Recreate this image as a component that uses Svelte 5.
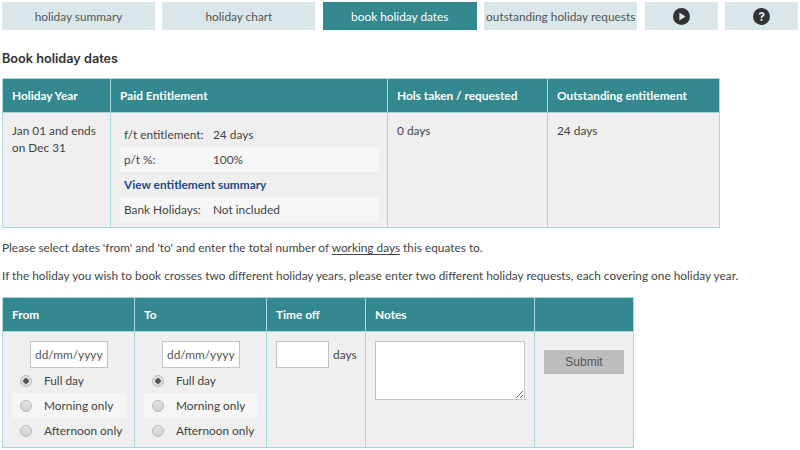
<script>
    let tabs = ["holiday summary", "holiday chart", "book holiday dates", "outstanding holiday requests"];
    let dayParts = ["Full day", "Morning only", "Afternoon only"];
    let entitlement = [
        { label: "f/t entitlement:", value: "24 days" },
        { label: "p/t %:", value: "100%" },
        { link: "View entitlement summary" },
        { label: "Bank Holidays:", value: "Not included" },
    ];
</script>

<main>
    <nav>
        {#each tabs as tab, i}
            <a href="#top" class="tab" class:active={i === 2}>{tab}</a>
        {/each}
        <a href="#top" class="tab small" aria-label="play">
            <svg viewBox="0 0 16 16" width="17" height="17">
                <circle cx="8" cy="8" r="8" fill="#333" />
                <path d="M6 4.2 L11.8 8 L6 11.8 Z" fill="#d9e7ea" />
            </svg>
        </a>
        <a href="#top" class="tab small" aria-label="help">
            <svg viewBox="0 0 16 16" width="17" height="17">
                <circle cx="8" cy="8" r="8" fill="#333" />
                <path d="M5.3 6.2 C5.4 4.5 6.6 3.7 8.1 3.7 C9.7 3.7 10.9 4.6 10.9 6 C10.9 7.8 8.9 7.8 8.9 9.4 L7.1 9.4 C7.1 7.2 9 7.2 9 6.1 C9 5.6 8.6 5.3 8 5.3 C7.4 5.3 7 5.7 7 6.4 Z" fill="#d9e7ea" />
                <rect x="7.1" y="10.3" width="1.8" height="1.8" fill="#d9e7ea" />
            </svg>
        </a>
    </nav>

    <h1>Book holiday dates</h1>

    <table class="summary">
        <thead>
            <tr>
                <th class="c1">Holiday Year</th>
                <th class="c2">Paid Entitlement</th>
                <th class="c3">Hols taken / requested</th>
                <th class="c4">Outstanding entitlement</th>
            </tr>
        </thead>
        <tbody>
            <tr>
                <td>Jan 01 and ends on Dec 31</td>
                <td class="ent">
                    {#each entitlement as row}
                        <div class="ent-row">
                            {#if row.link}
                                <a href="#top" class="view">{row.link}</a>
                            {:else}
                                <span class="lbl">{row.label}</span><span>{row.value}</span>
                            {/if}
                        </div>
                    {/each}
                </td>
                <td>0 days</td>
                <td>24 days</td>
            </tr>
        </tbody>
    </table>

    <p class="first">Please select dates 'from' and 'to' and enter the total number of <u>working days</u> this equates to.</p>
    <p>If the holiday you wish to book crosses two different holiday years, please enter two different holiday requests, each covering one holiday year.</p>

    <table class="form">
        <thead>
            <tr>
                <th class="f1">From</th>
                <th class="f1">To</th>
                <th class="f3">Time off</th>
                <th class="f4">Notes</th>
                <th class="f5"></th>
            </tr>
        </thead>
        <tbody>
            <tr>
                {#each ["from", "to"] as name}
                    <td class="date-cell">
                        <input class="date" type="text" placeholder="dd/mm/yyyy" />
                        {#each dayParts as part, i}
                            <label class="radio">
                                <input type="radio" {name} checked={i === 0} />
                                {part}
                            </label>
                        {/each}
                    </td>
                {/each}
                <td class="off-cell">
                    <div class="off"><input class="num" type="text" /> days</div>
                </td>
                <td class="notes-cell"><textarea></textarea></td>
                <td class="submit-cell"><button>Submit</button></td>
            </tr>
        </tbody>
    </table>
</main>

<style>
    :global(body) {
        margin: 0;
        background: #fff;
    }

    main {
        width: 800px;
        height: 450px;
        overflow: hidden;
        font-family: "Lato", sans-serif;
        font-size: 11.85px;
        color: #444;
        box-sizing: border-box;
        padding: 2px 2px 0;
    }

    nav {
        display: flex;
        justify-content: space-between;
        width: 796px;
    }

    .tab {
        width: 153px;
        height: 28px;
        display: flex;
        align-items: center;
        justify-content: center;
        background: #d9e7ea;
        color: #555;
        text-decoration: none;
        white-space: nowrap;
    }

    .tab.active {
        width: 154px;
        background: #348890;
        color: #fff;
    }

    .tab.small {
        width: 73px;
    }

    h1 {
        font-family: "Inter", sans-serif;
        font-size: 12.7px;
        font-weight: 600;
        color: #333;
        margin: 0;
        padding-top: 20px;
        height: 28px;
        line-height: 18px;
    }

    table {
        border-collapse: collapse;
        table-layout: fixed;
    }

    th {
        background: #348890;
        color: #fff;
        font-weight: 700;
        text-align: left;
        height: 34px;
        padding: 0 9px;
        border: 1px solid #a8d8dc;
        box-sizing: border-box;
        font-size: 11.85px;
    }

    td {
        background: #efefef;
        border: 1px solid #a8d8dc;
        vertical-align: top;
        padding: 9px 9px;
        line-height: 17px;
    }

    .summary {
        width: 717px;
    }

    .c1 { width: 108px; }
    .c2 { width: 277px; }
    .c3 { width: 160px; }
    .c4 { width: 172px; }

    td.ent {
        padding: 9px 8px 5px 9px;
    }

    .ent-row {
        display: flex;
        align-items: center;
        height: 25px;
        padding-left: 4px;
    }

    .ent-row:nth-child(even) {
        background: #f6f6f6;
    }

    .lbl {
        width: 89px;
    }

    .view {
        color: #1d4a8c;
        font-weight: 700;
        text-decoration: none;
    }

    p {
        margin: 0;
        height: 28px;
        line-height: 16px;
    }

    p.first {
        margin-top: 12px;
    }

    u {
        text-underline-offset: 2px;
    }

    .form {
        width: 631px;
        margin-top: 1px;
    }

    .f1 { width: 132px; }
    .f3 { width: 99px; }
    .f4 { width: 169px; }
    .f5 { width: 99px; }

    .date-cell {
        padding: 9px 0 0;
        height: 116px;
        box-sizing: border-box;
    }

    .date {
        display: block;
        box-sizing: border-box;
        width: 78px;
        height: 27px;
        margin: 0 auto 0 27px;
        padding: 0 4px;
        border: 1px solid #c4c4c4;
        background: #fff;
        font: inherit;
        color: #555;
    }

    .date::placeholder {
        color: #555;
        opacity: 1;
    }

    .radio {
        display: flex;
        align-items: center;
        height: 25px;
        margin: 0 8px 0 9px;
        white-space: nowrap;
    }

    .radio:nth-of-type(2) {
        background: #f6f6f6;
    }

    .radio input {
        appearance: none;
        width: 12px;
        height: 12px;
        margin: 0 12px 0 8px;
        border-radius: 50%;
        border: 1px solid #bbb;
        background: linear-gradient(#e4e4e4, #d0d0d0);
        flex: none;
    }

    .radio input:checked {
        background: radial-gradient(circle, #555 0 2.5px, #ddd 3px);
    }

    .off-cell,
    .notes-cell {
        padding-top: 9px;
    }

    .off {
        display: flex;
        align-items: center;
        gap: 4px;
    }

    .num {
        box-sizing: border-box;
        width: 53px;
        height: 27px;
        border: 1px solid #c4c4c4;
        background: #fff;
        flex: none;
    }

    textarea {
        display: block;
        box-sizing: border-box;
        width: 150px;
        height: 59px;
        border: 1px solid #c4c4c4;
        background: #fff;
    }

    .submit-cell {
        padding-top: 18px;
    }

    button {
        width: 80px;
        height: 24px;
        border: none;
        background: #bdbdbd;
        color: #555;
        font-family: "Liberation Sans", sans-serif;
        font-size: 12px;
    }
</style>
